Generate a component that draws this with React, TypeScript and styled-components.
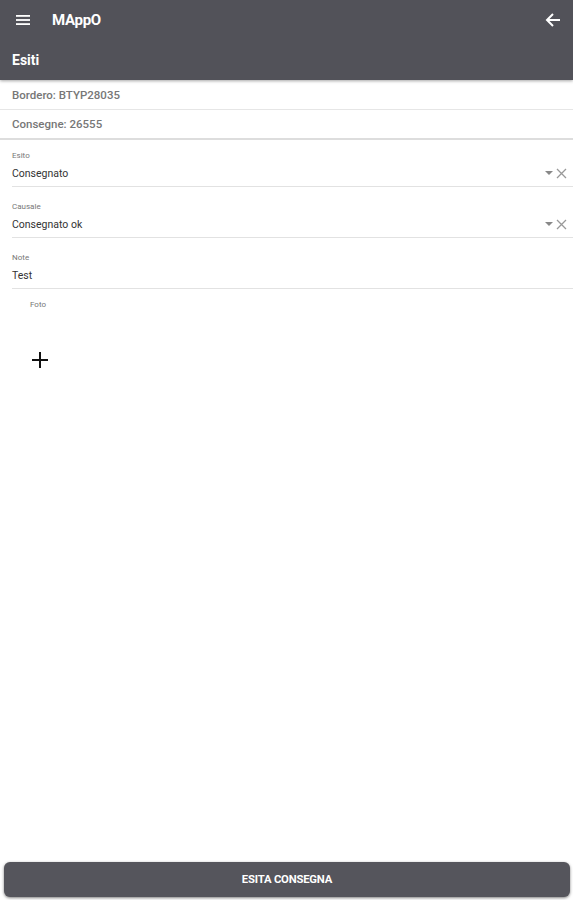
import React from 'react';
import styled, {createGlobalStyle} from 'styled-components';

const GlobalStyle = createGlobalStyle`
  html, body {
    margin: 0;
    padding: 0;
    background: #fff;
    font-family: Roboto, "Noto Sans", Arial, sans-serif;
  }
  * {
    box-sizing: border-box;
  }
`;

const Page = styled.div`
  display: flex;
  flex-direction: column;
  width: 573px;
  height: 900px;
  background: #fff;
`;

const Header = styled.header`
  background: #525259;
  color: #fff;
  box-shadow: 0 1px 3px rgba(0, 0, 0, 0.35);
`;

const Toolbar = styled.div`
  display: flex;
  align-items: center;
  height: 40px;
  padding: 0 12px 0 16px;
`;

const Title = styled.div`
  flex-grow: 1;
  margin-left: 22px;
  font-size: 15px;
  font-weight: 700;
  letter-spacing: -0.3px;
`;

const SubTitle = styled.div`
  display: flex;
  align-items: center;
  height: 40px;
  padding: 0 12px;
  font-size: 14px;
  font-weight: 700;
`;

const InfoRow = styled.div<{$thick?: boolean}>`
  display: flex;
  align-items: center;
  height: 30px;
  padding: 0 12px;
  font-size: 11.5px;
  font-weight: 500;
  color: #777;
  border-bottom: ${(p) => (p.$thick ? '2px solid #ddd' : '1px solid #e6e6e6')};
`;

const Form = styled.div`
  display: flex;
  flex-direction: column;
  gap: 15px;
  padding: 11px 0 0 12px;
`;

const Field = styled.div`
  display: flex;
  flex-direction: column;
  padding-bottom: 3px;
  border-bottom: 1px solid #e2e2e2;
`;

const Label = styled.div`
  font-size: 8px;
  line-height: 10px;
  height: 10px;
  color: #777;
`;

const ValueRow = styled.div`
  display: flex;
  align-items: center;
  height: 20px;
  margin-top: 2px;
  padding-right: 6px;
`;

const Value = styled.div`
  flex-grow: 1;
  font-size: 10.5px;
  color: #333;
`;

const Icons = styled.div`
  display: flex;
  align-items: center;
  gap: 3px;
  color: #999;
`;

const FotoSection = styled.div`
  display: flex;
  flex-direction: column;
  padding: 11px 0 0 30px;
`;

const AddButton = styled.div`
  display: flex;
  margin: 42px 0 0 2px;
`;

const Spacer = styled.div`
  flex-grow: 1;
`;

const Button = styled.button`
  margin: 0 3px 3px 4px;
  height: 35px;
  border: none;
  border-radius: 6px;
  background: #55555c;
  color: #fff;
  font-family: Roboto, Arial, sans-serif;
  font-size: 11.3px;
  font-weight: 700;
  letter-spacing: -0.2px;
  box-shadow: 0 1px 3px rgba(0, 0, 0, 0.5);
`;

const MenuIcon = () => (
  <svg width="14" height="12" viewBox="0 0 14 12">
    <rect x="0" y="1" width="14" height="1.8" fill="#fff" />
    <rect x="0" y="5.1" width="14" height="1.8" fill="#fff" />
    <rect x="0" y="9.2" width="14" height="1.8" fill="#fff" />
  </svg>
);

const BackIcon = () => (
  <svg width="16" height="16" viewBox="0 0 16 16">
    <path d="M15 8H2.5M8 2L2 8l6 6" stroke="#fff" strokeWidth="2" fill="none" />
  </svg>
);

const DropIcons = () => (
  <Icons>
    <svg width="8" height="5" viewBox="0 0 8 5">
      <path d="M0 0h8L4 4z" fill="#888" />
    </svg>
    <svg width="11" height="11" viewBox="0 0 11 11">
      <path d="M1 1l9 9M10 1l-9 9" stroke="#999" strokeWidth="1.3" />
    </svg>
  </Icons>
);

const PlusIcon = () => (
  <svg width="16" height="16" viewBox="0 0 16 16">
    <path d="M8 0v16M0 8h16" stroke="#111" strokeWidth="2" />
  </svg>
);

const App = () => {
  return (
    <Page>
      <GlobalStyle />
      <Header>
        <Toolbar>
          <MenuIcon />
          <Title>MAppO</Title>
          <BackIcon />
        </Toolbar>
        <SubTitle>Esiti</SubTitle>
      </Header>
      <InfoRow>Bordero: BTYP28035</InfoRow>
      <InfoRow $thick>Consegne: 26555</InfoRow>
      <Form>
        <Field>
          <Label>Esito</Label>
          <ValueRow>
            <Value>Consegnato</Value>
            <DropIcons />
          </ValueRow>
        </Field>
        <Field>
          <Label>Causale</Label>
          <ValueRow>
            <Value>Consegnato ok</Value>
            <DropIcons />
          </ValueRow>
        </Field>
        <Field>
          <Label>Note</Label>
          <ValueRow>
            <Value>Test</Value>
          </ValueRow>
        </Field>
      </Form>
      <FotoSection>
        <Label>Foto</Label>
        <AddButton>
          <PlusIcon />
        </AddButton>
      </FotoSection>
      <Spacer />
      <Button>ESITA CONSEGNA</Button>
    </Page>
  );
};

export default App;
